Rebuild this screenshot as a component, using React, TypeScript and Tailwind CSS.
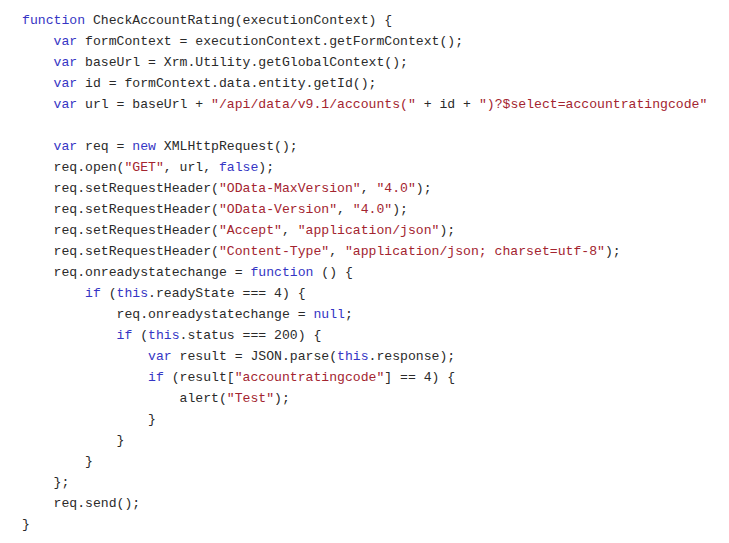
type Tok = [string, "k" | "s" | "p"];

// k = keyword, s = string, p = plain
const lines: Tok[][] = [
  [["function", "k"], [" CheckAccountRating(executionContext) {", "p"]],
  [["    ", "p"], ["var", "k"], [" formContext = executionContext.getFormContext();", "p"]],
  [["    ", "p"], ["var", "k"], [" baseUrl = Xrm.Utility.getGlobalContext();", "p"]],
  [["    ", "p"], ["var", "k"], [" id = formContext.data.entity.getId();", "p"]],
  [
    ["    ", "p"],
    ["var", "k"],
    [" url = baseUrl + ", "p"],
    ['"/api/data/v9.1/accounts("', "s"],
    [" + id + ", "p"],
    ['")?$select=accountratingcode"', "s"],
  ],
  [],
  [["    ", "p"], ["var", "k"], [" req = ", "p"], ["new", "k"], [" XMLHttpRequest();", "p"]],
  [["    req.open(", "p"], ['"GET"', "s"], [", url, ", "p"], ["false", "k"], [");", "p"]],
  [["    req.setRequestHeader(", "p"], ['"OData-MaxVersion"', "s"], [", ", "p"], ['"4.0"', "s"], [");", "p"]],
  [["    req.setRequestHeader(", "p"], ['"OData-Version"', "s"], [", ", "p"], ['"4.0"', "s"], [");", "p"]],
  [["    req.setRequestHeader(", "p"], ['"Accept"', "s"], [", ", "p"], ['"application/json"', "s"], [");", "p"]],
  [
    ["    req.setRequestHeader(", "p"],
    ['"Content-Type"', "s"],
    [", ", "p"],
    ['"application/json; charset=utf-8"', "s"],
    [");", "p"],
  ],
  [["    req.onreadystatechange = ", "p"], ["function", "k"], [" () {", "p"]],
  [["        ", "p"], ["if", "k"], [" (", "p"], ["this", "k"], [".readyState === 4) {", "p"]],
  [["            req.onreadystatechange = ", "p"], ["null", "k"], [";", "p"]],
  [["            ", "p"], ["if", "k"], [" (", "p"], ["this", "k"], [".status === 200) {", "p"]],
  [["                ", "p"], ["var", "k"], [" result = JSON.parse(", "p"], ["this", "k"], [".response);", "p"]],
  [["                ", "p"], ["if", "k"], [" (result[", "p"], ['"accountratingcode"', "s"], ["] == 4) {", "p"]],
  [["                    alert(", "p"], ['"Test"', "s"], [");", "p"]],
  [["                }", "p"]],
  [["            }", "p"]],
  [["        }", "p"]],
  [["    };", "p"]],
  [["    req.send();", "p"]],
  [["}", "p"]],
];

const color = {
  k: "text-[#3535c4]",
  s: "text-[#a3242f]",
  p: "text-[#2a2a2a]",
};

export default function App() {
  return (
    <div className="w-[729px] h-[543px] bg-white overflow-hidden pt-[10px] pl-[22px]">
      <pre className="font-['Liberation_Mono',monospace] text-[13.13px] leading-[21px] m-0">
        {lines.map((line, i) => (
          <div key={i} className="h-[21px] whitespace-pre">
            {line.map(([text, kind], j) => (
              <span key={j} className={color[kind]}>
                {text}
              </span>
            ))}
          </div>
        ))}
      </pre>
    </div>
  );
}
